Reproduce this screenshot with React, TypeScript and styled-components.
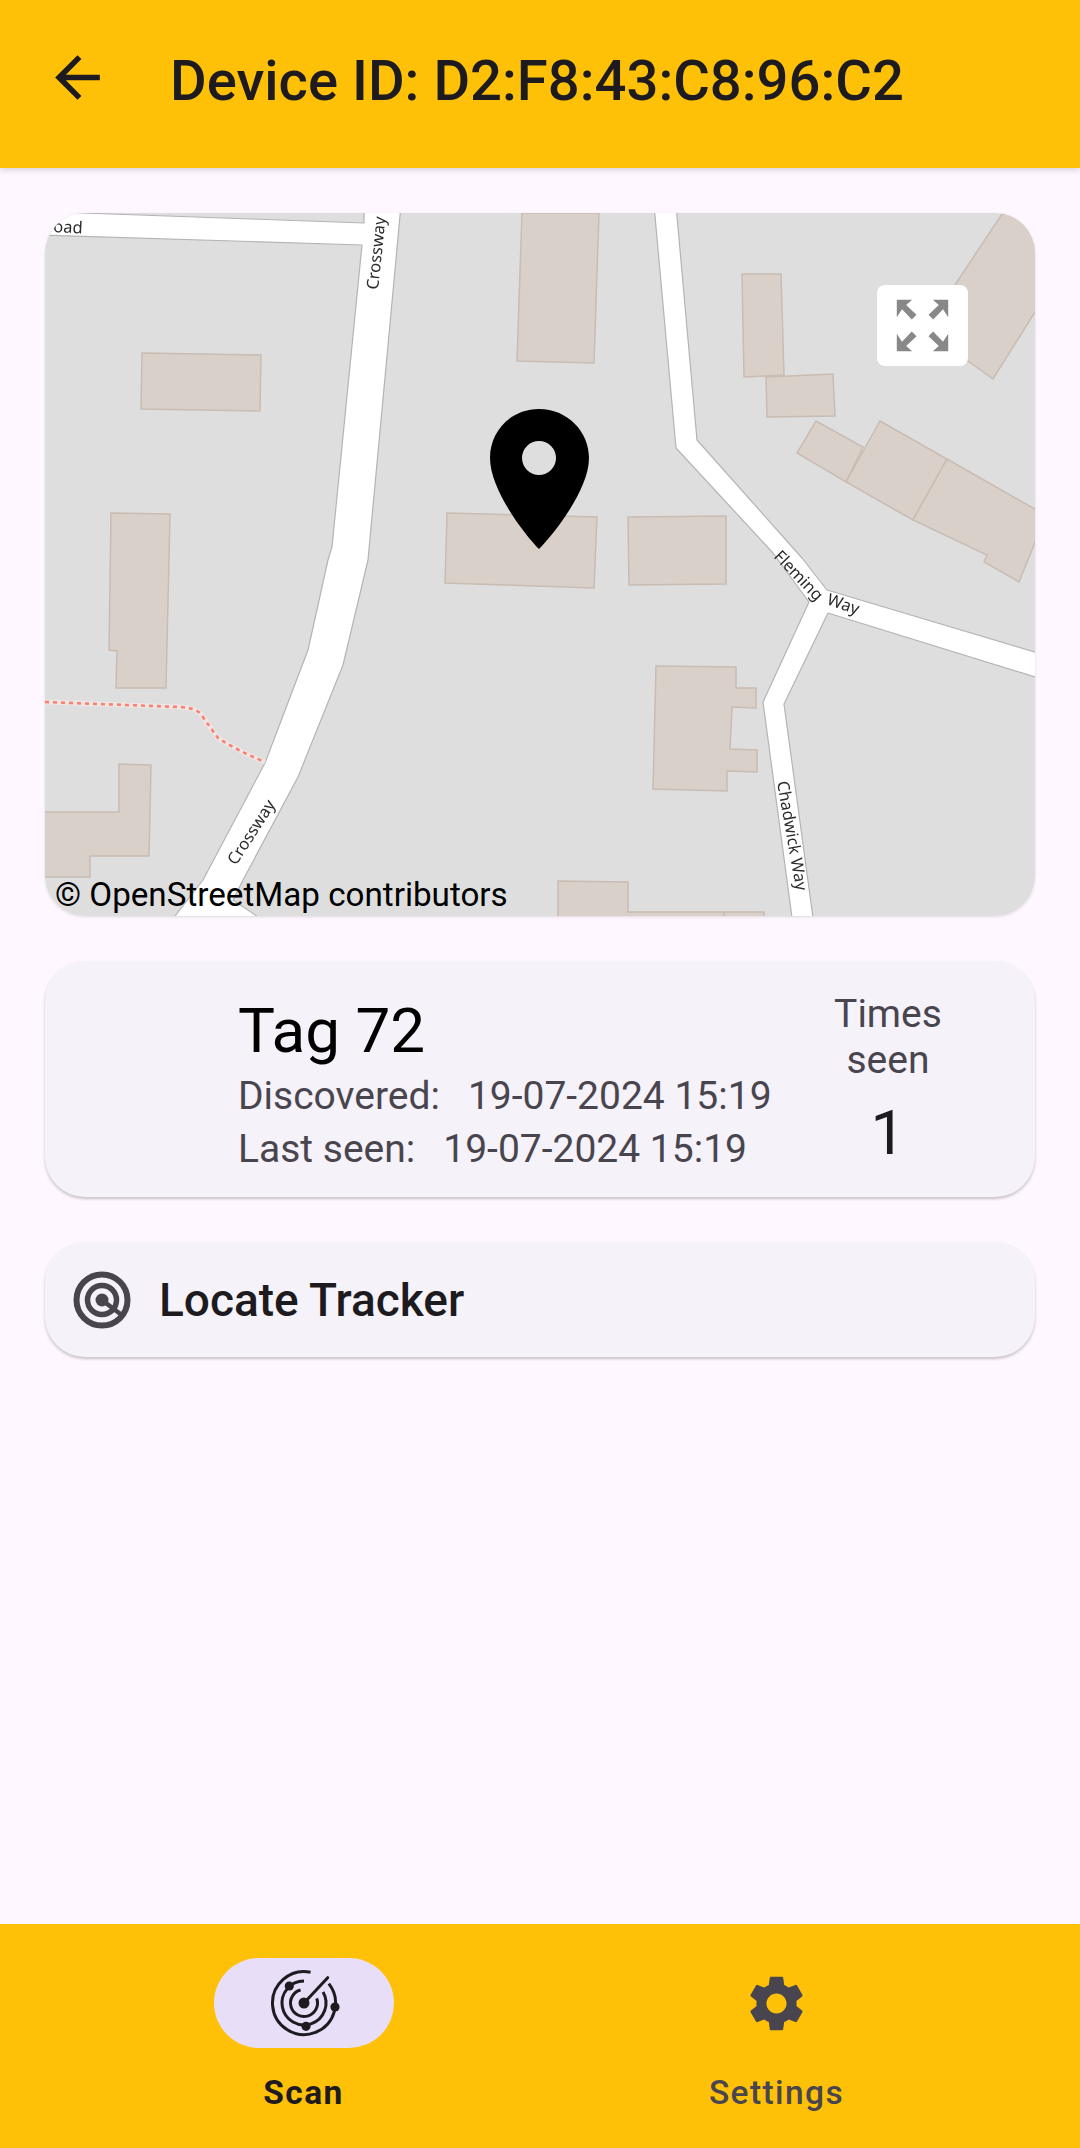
import React from 'react';
import styled, { createGlobalStyle } from 'styled-components';

const GlobalStyle = createGlobalStyle`
    *, *::before, *::after {
        box-sizing: border-box;
    }
    html, body {
        margin: 0;
        padding: 0;
        background: #FEF7FF;
        font-family: Roboto, "Liberation Sans", sans-serif;
    }
`

const Page = styled.div`
    display: flex;
    flex-direction: column;
    width: 1080px;
    height: 2148px;
    background: #FEF7FF;
    overflow: hidden;
`

const Header = styled.header`
    display: flex;
    align-items: center;
    gap: 59px;
    height: 168px;
    padding: 0 0 13px 44px;
    flex-shrink: 0;
    background: #FFC107;
    box-shadow: 0 2px 6px rgba(0, 0, 0, 0.16);
    position: relative;
`

const BackButton = styled.button`
    display: flex;
    width: 67px;
    height: 67px;
    padding: 0;
    border: 0;
    background: none;
    color: #1D1B20;
`

const Title = styled.h1`
    margin: 6px 0 0;
    font-size: 56.2px;
    font-weight: 500;
    color: #1D1B20;
`

const Content = styled.main`
    display: flex;
    flex-direction: column;
    gap: 45px;
    flex: 1;
    padding: 45px 45px 0;
`

const MapCard = styled.section`
    position: relative;
    height: 703px;
    flex-shrink: 0;
    border-radius: 40px;
    overflow: hidden;
    box-shadow: 0 1px 3px rgba(0, 0, 0, 0.12);
`

const MapDrawing = styled.svg`
    display: block;
    width: 990px;
    height: 703px;
`

const MapBase = styled.g`
    filter: blur(0.45px);
`

const FullscreenButton = styled.button`
    position: absolute;
    top: 72px;
    right: 67px;
    display: flex;
    width: 91px;
    height: 81px;
    padding: 0;
    border: 0;
    border-radius: 8px;
    background: #fff;
`

const Attribution = styled.span`
    position: absolute;
    left: 10px;
    bottom: 2px;
    font-size: 33.2px;
    line-height: 38px;
    color: #000;
`

const Card = styled.section`
    background: #F6F2F9;
    border-radius: 40px;
    box-shadow: 0 2px 3px rgba(0, 0, 0, 0.22);
`

const InfoCard = styled(Card)`
    display: flex;
    justify-content: space-between;
    height: 236px;
    padding: 30px 47px 0 193px;
`

const InfoColumn = styled.div`
    display: flex;
    flex-direction: column;
`

const TagName = styled.div`
    font-size: 62px;
    line-height: 79px;
    color: #000;
`

const DateRow = styled.div`
    display: flex;
    gap: 28px;
    font-size: 39px;
    line-height: 53px;
    color: #49454F;
`

const SeenColumn = styled.div`
    display: flex;
    flex-direction: column;
    align-items: center;
    width: 200px;
`

const SeenLabel = styled.div`
    font-size: 39px;
    line-height: 46px;
    text-align: center;
    color: #49454F;
`

const SeenCount = styled.div`
    margin-top: 13px;
    font-size: 62px;
    line-height: 73px;
    color: #1D1B20;
`

const LocateCard = styled(Card)`
    display: flex;
    align-items: center;
    gap: 27px;
    height: 115px;
    padding-left: 27px;
`

const LocateLabel = styled.span`
    font-size: 46px;
    font-weight: 500;
    color: #1D1B20;
`

const BottomNav = styled.nav`
    display: grid;
    grid-template-columns: 1fr 1fr;
    height: 224px;
    padding: 34px 67px 0;
    flex-shrink: 0;
    background: #FFC107;
`

const NavItem = styled.div`
    display: flex;
    flex-direction: column;
    align-items: center;
`

const NavPill = styled.div<{ $active?: boolean }>`
    display: flex;
    align-items: center;
    justify-content: center;
    width: 180px;
    height: 90px;
    border-radius: 45px;
    background: ${p => (p.$active ? '#E8DEF8' : 'transparent')};
    color: ${p => (p.$active ? '#1D1B20' : '#49454F')};
`

const NavLabel = styled.span<{ $active?: boolean }>`
    margin-top: 25px;
    font-size: 33.5px;
    line-height: 40px;
    letter-spacing: 1.4px;
    font-weight: ${p => (p.$active ? 700 : 500)};
    color: ${p => (p.$active ? '#1D1B20' : '#49454F')};
`

const buildings = [
    '522,213 599,213 594,363 517,361',
    '142,353 261,355 260,411 141,409',
    '111,513 170,514 166,688 116,688 117,651 109,650',
    '447,513 597,517 594,588 445,583',
    '628,517 726,516 726,584 629,585',
    '742,274 781,274 784,375 744,377',
    '766,377 833,374 835,416 767,417',
    '1002,214 1040,214 1040,304 993,379 925,330',
    '816,421 863,447 846,482 797,453',
    '880,421 947,459 913,520 846,482',
    '947,459 1040,512 1040,530 1019,582 984,562 987,555 913,520',
    '656,666 736,667 736,688 756,688 756,708 732,707 730,749 757,750 757,772 727,771 727,791 653,789',
    '119,764 151,765 149,856 90,856 90,877 40,877 40,812 119,812',
    '558,881 628,882 628,912 764,912 764,925 558,925',
]

const roads = [
    // road along the top, joins Crossway
    '40,212 83,213 364,223 364,205 401,205 395,270 368,560 343,665 298,777 243,880 233,900 270,925 168,925 203,880 265,763 308,650 328,560 332,547 362,245 40,235',
    // Fleming Way and Chadwick Way
    '654,205 676,205 697,440 802,558 827,590 1045,655 1045,680 828,613 784,704 814,925 793,925 763,702 809,602 773,553 676,448',
]

const labels = [
    { text: 'oad', x: 53, y: 232, angle: 3 },
    { text: 'Crossway', x: 378, y: 290, angle: -84 },
    { text: 'Crossway', x: 236, y: 866, angle: -57 },
    { text: 'Fleming', x: 773, y: 557, angle: 46 },
    { text: 'Way', x: 826, y: 604, angle: 19 },
    { text: 'Chadwick Way', x: 777, y: 782, angle: 80 },
]

const fullscreenArrow = '-25.7,-25.7 -10.3,-25.7 -16.3,-20.5 -6,-10.7 -10.7,-6 -20.5,-16.3 -25.7,-8.3'

function arc(r: number, from: number, to: number) {
    const point = (deg: number) => {
        const rad = (deg * Math.PI) / 180;
        return `${(r * Math.cos(rad)).toFixed(2)} ${(r * Math.sin(rad)).toFixed(2)}`;
    };
    const large = to - from > 180 ? 1 : 0;
    return `M${point(from)}A${r} ${r} 0 ${large} 1 ${point(to)}`;
}

const RadarIcon = () => (
    <svg width="72" height="72" viewBox="-36 -36 72 72" fill="none" stroke="currentColor">
        <path d={arc(31.5, -38, 282)} strokeWidth="3" />
        <path d={arc(22, -30, 270)} strokeWidth="3" />
        <path d={arc(13.5, -20, 255)} strokeWidth="3" />
        <path d="M0 0L23.7-25.3" strokeWidth="3" strokeLinecap="round" />
        <g fill="currentColor" stroke="none">
            <circle r="5.5" />
            <circle cx="-14.7" cy="-17" r="4.6" />
            <circle cx="31" cy="4" r="4.6" />
            <circle cx="2" cy="23.3" r="4.6" />
        </g>
    </svg>
)

const GearIcon = () => (
    <svg width="67" height="67" viewBox="0 0 24 24" fill="currentColor">
        <path d="M19.14 12.94c.04-.3.06-.61.06-.94 0-.32-.02-.64-.07-.94l2.03-1.58c.18-.14.23-.41.12-.61l-1.92-3.32c-.12-.22-.37-.29-.59-.22l-2.39.96c-.5-.38-1.03-.7-1.62-.94l-.36-2.54c-.04-.24-.24-.41-.48-.41h-3.84c-.24 0-.43.17-.47.41l-.36 2.54c-.59.24-1.13.57-1.62.94l-2.39-.96c-.22-.08-.47 0-.59.22L2.74 8.87c-.12.21-.08.47.12.61l2.03 1.58c-.05.3-.09.63-.09.94s.02.64.07.94l-2.03 1.58c-.18.14-.23.41-.12.61l1.92 3.32c.12.22.37.29.59.22l2.39-.96c.5.38 1.03.7 1.62.94l.36 2.54c.05.24.24.41.48.41h3.84c.24 0 .44-.17.47-.41l.36-2.54c.59-.24 1.13-.56 1.62-.94l2.39.96c.22.08.47 0 .59-.22l1.92-3.32c.12-.22.07-.47-.12-.61l-2.01-1.58zM12 15.6c-1.98 0-3.6-1.62-3.6-3.6s1.62-3.6 3.6-3.6 3.6 1.62 3.6 3.6-1.62 3.6-3.6 3.6z" />
    </svg>
)

const TargetIcon = () => (
    <svg width="60" height="60" viewBox="-30 -30 60 60" fill="none" stroke="#49454F">
        <circle r="25.5" strokeWidth="6" />
        <circle r="14.5" strokeWidth="5.5" />
        <circle r="6.5" fill="#49454F" stroke="none" />
        <path d="M0 0L19 14.5" strokeWidth="4.5" />
    </svg>
)

export default function App() {
    return (
        <Page>
            <GlobalStyle />
            <Header>
                <BackButton>
                    <svg width="67" height="67" viewBox="0 0 24 24" fill="currentColor">
                        <path d="M20 11H7.83l5.59-5.59L12 4l-8 8 8 8 1.41-1.41L7.83 13H20v-2z" />
                    </svg>
                </BackButton>
                <Title>Device ID: D2:F8:43:C8:96:C2</Title>
            </Header>
            <Content>
                <MapCard>
                    <MapDrawing viewBox="45 213 990 703">
                        <rect x="45" y="213" width="990" height="703" fill="#DEDEDE" />
                        <MapBase>
                            {buildings.map(points => (
                                <polygon key={points} points={points} fill="#D9D0C9" stroke="#C8BCB3" strokeWidth="1.5" />
                            ))}
                            <path d="M724 912V925" stroke="#C8BCB3" strokeWidth="1.5" />
                            {roads.map(points => (
                                <polygon key={points} points={points} fill="#fff" stroke="#B4B4B4" strokeWidth="1.2" strokeLinejoin="round" />
                            ))}
                            <path d="M45 702L180 707Q195 708 200 713Q210 727 218 738Q240 752 265 762" fill="none" stroke="#EDE6E4" strokeWidth="5" />
                            <path d="M45 702L180 707Q195 708 200 713Q210 727 218 738Q240 752 265 762" fill="none" stroke="#FA8072" strokeWidth="2.6" strokeDasharray="4 4" />
                            {labels.map(label => (
                                <text
                                    key={label.text + label.x}
                                    transform={`translate(${label.x} ${label.y}) rotate(${label.angle})`}
                                    fontFamily="'Noto Sans', 'Open Sans', sans-serif"
                                    fontSize="16.5"
                                    fill="#2B2B2B"
                                >
                                    {label.text}
                                </text>
                            ))}
                        </MapBase>
                        <path
                            fillRule="evenodd"
                            fill="#000"
                            d="M539 409C511 409 490 431 490 458C490 490 525 535 539 549C553 535 589 490 589 458C589 431 567 409 539 409ZM539 441A17 17 0 1 0 539 475A17 17 0 1 0 539 441Z"
                        />
                    </MapDrawing>
                    <FullscreenButton>
                        <svg width="91" height="81" viewBox="-45.5 -40.5 91 81" fill="#888">
                            <polygon points={fullscreenArrow} />
                            <polygon points={fullscreenArrow} transform="scale(-1 1)" />
                            <polygon points={fullscreenArrow} transform="scale(1 -1)" />
                            <polygon points={fullscreenArrow} transform="scale(-1 -1)" />
                        </svg>
                    </FullscreenButton>
                    <Attribution>© OpenStreetMap contributors</Attribution>
                </MapCard>
                <InfoCard>
                    <InfoColumn>
                        <TagName>Tag 72</TagName>
                        <DateRow><span>Discovered:</span><span>19-07-2024 15:19</span></DateRow>
                        <DateRow><span>Last seen:</span><span>19-07-2024 15:19</span></DateRow>
                    </InfoColumn>
                    <SeenColumn>
                        <SeenLabel>Times<br />seen</SeenLabel>
                        <SeenCount>1</SeenCount>
                    </SeenColumn>
                </InfoCard>
                <LocateCard>
                    <TargetIcon />
                    <LocateLabel>Locate Tracker</LocateLabel>
                </LocateCard>
            </Content>
            <BottomNav>
                <NavItem>
                    <NavPill $active><RadarIcon /></NavPill>
                    <NavLabel $active>Scan</NavLabel>
                </NavItem>
                <NavItem>
                    <NavPill><GearIcon /></NavPill>
                    <NavLabel>Settings</NavLabel>
                </NavItem>
            </BottomNav>
        </Page>
    );
}
